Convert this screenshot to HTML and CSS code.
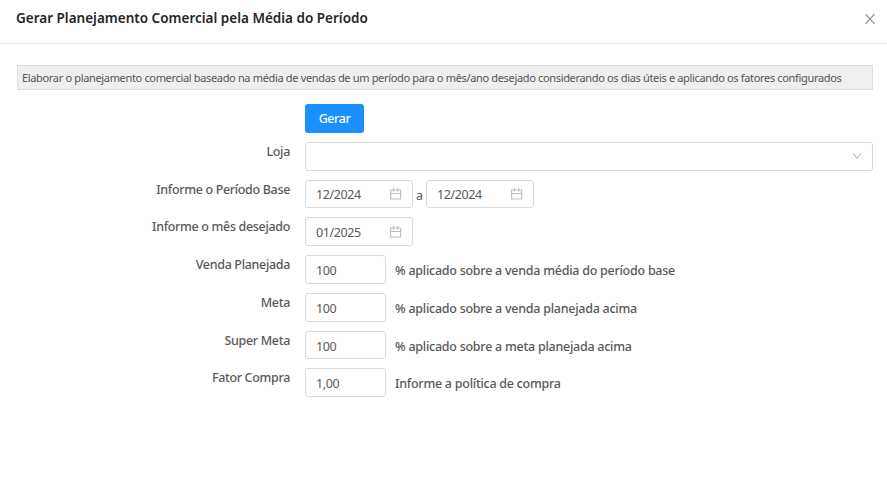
FILE: index.html
```html
<!DOCTYPE html>
<html lang="pt-BR">
<head>
<meta charset="utf-8">
<title>Gerar Planejamento Comercial</title>
<link rel="stylesheet" href="styles.css">
</head>
<body>
<svg class="defs" aria-hidden="true">
  <symbol id="calendar" viewBox="0 0 12 12"><path d="M.6 2h10v9H.6zM.6 5.500h10M3.500 0v3.500M7.700 0v3.500" fill="none" stroke="currentColor" stroke-width="1.200"/></symbol>
</svg>
<header class="header">
  <h1 class="title"><span>Gerar Planejamento Comercial pela Média do Período</span></h1>
  <button class="close" aria-label="Fechar"><svg width="10" height="10" viewBox="0 0 10 10"><path d="M.5 .2l9 9.600M9.500 .2l-9 9.600" fill="none" stroke="currentColor" stroke-width="1.200"/></svg></button>
</header>
<main class="content">
  <p class="notice"><span>Elaborar o planejamento comercial baseado na média de vendas de um período para o mês/ano desejado considerando os dias úteis e aplicando os fatores configurados</span></p>
  <form class="form">
    <div class="row"><div class="label"></div><button type="button" class="primary">Gerar</button></div>
    <div class="row"><div class="label">Loja</div><div class="field select"><svg width="10" height="8" viewBox="0 0 10 8"><path d="M1 1l4 5.500L9 1" fill="none" stroke="currentColor" stroke-width="1.100"/></svg></div></div>
    <div class="row short"><div class="label">Informe o Período Base</div><div class="field date"><span>12/2024</span><svg class="cal"><use href="#calendar"/></svg></div><span class="sep">a</span><div class="field date"><span>12/2024</span><svg class="cal"><use href="#calendar"/></svg></div></div>
    <div class="row"><div class="label">Informe o mês desejado</div><div class="field date lower"><span>01/2025</span><svg class="cal"><use href="#calendar"/></svg></div></div>
    <div class="row"><div class="label">Venda Planejada</div><div class="field number">100</div><span class="hint">% aplicado sobre a venda média do período base</span></div>
    <div class="row"><div class="label">Meta</div><div class="field number">100</div><span class="hint">% aplicado sobre a venda planejada acima</span></div>
    <div class="row short"><div class="label">Super Meta</div><div class="field number">100</div><span class="hint">% aplicado sobre a meta planejada acima</span></div>
    <div class="row"><div class="label">Fator Compra</div><div class="field number">1,00</div><span class="hint">Informe a política de compra</span></div>
  </form>
</main>
</body>
</html>
```
FILE: styles.css
```css
* { box-sizing: border-box; }
body {
  margin: 0;
  background: #fff;
  color: #595959;
  font-family: "Noto Sans", "Open Sans", sans-serif;
  font-size: 12.5px;
  overflow: hidden;
}
.defs { position: absolute; width: 0; height: 0; }
.header {
  height: 44px;
  padding: 0 12px 7px 16px;
  display: flex;
  align-items: center;
  justify-content: space-between;
  border-bottom: 1px solid #e8e8e8;
}
.title {
  margin: 0;
  font-size: 13.5px;
  font-weight: 600;
  line-height: 20px;
  color: #262626;
  white-space: nowrap;
}
.close {
  display: flex;
  padding: 2px 0 0;
  border: 0;
  background: none;
  color: #8c8c8c;
}
.content { padding: 21px 14px 0 17px; }
.notice {
  margin: 0;
  height: 25px;
  padding: 0 4px;
  border: 1px solid #ddd;
  background: #efefef;
  color: #555;
  font-size: 11px;
  letter-spacing: -0.338px;
  line-height: 24px;
  white-space: nowrap;
}
.form { display: flex; flex-direction: column; gap: 9px; margin-top: 14px; }
.row { display: flex; height: 29px; white-space: nowrap; }
.short { height: 28px; }
.label {
  width: 273px;
  margin-right: 15px;
  text-align: right;
  font-weight: 500;
  letter-spacing: -0.33px;
  line-height: 20px;
}
.primary {
  width: 59px;
  padding: 0;
  border: 0;
  border-radius: 3px;
  background: #1890ff;
  color: #fff;
  font: 500 12.5px/29px "Noto Sans", sans-serif;
  letter-spacing: -0.4px;
}
.field {
  display: flex;
  align-items: center;
  border: 1px solid #d9d9d9;
  border-radius: 3px;
  padding: 2px 10px 0;
  letter-spacing: -0.4px;
}
.select { flex: 1; justify-content: flex-end; padding: 0 10px 2px; color: #bfbfbf; }
.date { width: 108px; justify-content: space-between; padding-top: 1px; }
.cal { width: 12px; height: 12px; color: #bfbfbf; margin-bottom: 2px; }
.lower { padding-top: 2px; }
.number { width: 81px; }
.sep { width: 13px; text-align: center; line-height: 31px; }
.hint { margin-left: 9px; font-weight: 500; letter-spacing: -0.255px; line-height: 31px; }
```
